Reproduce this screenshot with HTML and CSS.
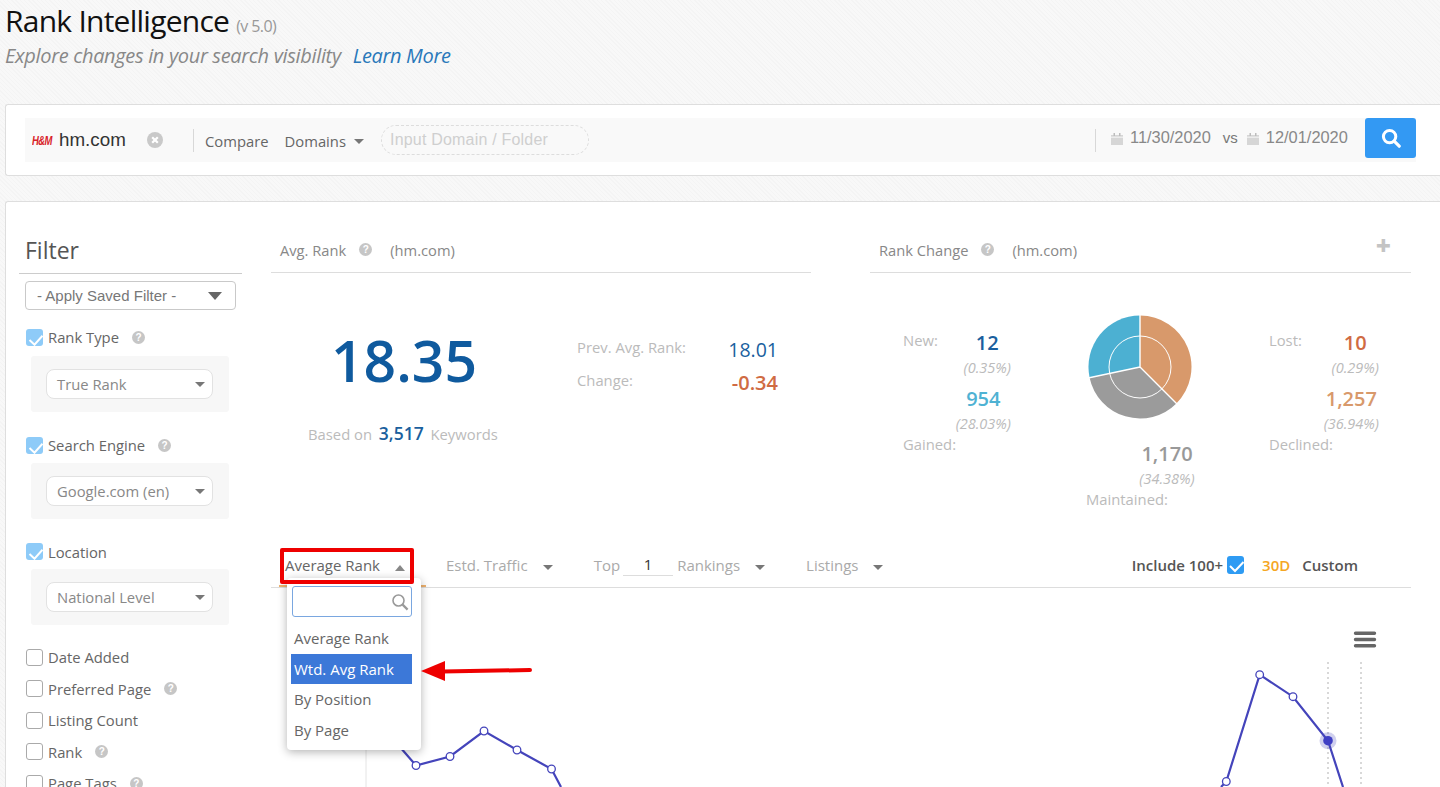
FILE: index.html
```html
<!DOCTYPE html>
<html lang="en">
<head>
<meta charset="utf-8">
<title>Rank Intelligence</title>
<link rel="stylesheet" href="styles.css">
</head>
<body>
<header class="page-head">
  <h1 class="title">Rank Intelligence <small class="version">(v 5.0)</small></h1>
  <p class="subtitle">Explore changes in your search visibility <a class="learn" href="#">Learn More</a></p>
</header>

<section class="search-card">
  <div class="search-bar">
    <span class="logo">H&amp;M</span>
    <span class="domain">hm.com</span>
    <svg class="clear" viewBox="0 0 16 16"><circle cx="8" cy="8" r="8" fill="#c9c9c9"/><path d="M5.2 5.2l5.6 5.6M10.8 5.2l-5.6 5.6" stroke="#fff" stroke-width="2.2"/></svg>
    <span class="divider"></span>
    <span class="bar-text compare">Compare</span>
    <span class="bar-text domains">Domains</span>
    <span class="caret small-caret"></span>
    <span class="pill">Input Domain / Folder</span>
    <span class="divider right"></span>
    <svg class="cal" viewBox="0 0 12 12"><path d="M0 2h12v10H0z" fill="#d6d6d6"/><path d="M2.5 0h1.5v3H2.5zM8 0h1.5v3H8z" fill="#bdbdbd"/><path d="M0 4.2h12" stroke="#fff" stroke-width=".8"/></svg>
    <span class="date">11/30/2020</span>
    <span class="vs">vs</span>
    <svg class="cal" viewBox="0 0 12 12"><path d="M0 2h12v10H0z" fill="#d6d6d6"/><path d="M2.5 0h1.5v3H2.5zM8 0h1.5v3H8z" fill="#bdbdbd"/><path d="M0 4.2h12" stroke="#fff" stroke-width=".8"/></svg>
    <span class="date">12/01/2020</span>
    <button class="go" type="button" aria-label="Search"><svg viewBox="0 0 20 20" width="20" height="20"><circle cx="8.6" cy="8.6" r="6.2" fill="none" stroke="#fff" stroke-width="3"/><path d="M13.2 13.2l5 5" stroke="#fff" stroke-width="3.2" stroke-linecap="round"/></svg></button>
  </div>
</section>

<main class="main-card">
  <aside class="filter">
    <h2 class="filter-title">Filter</h2>
    <div class="saved">- Apply Saved Filter -<span class="caret big-caret"></span></div>

    <div class="check-row first"><span class="box on"><svg viewBox="0 0 17 17"><path d="M3.5 11l5 4.7 8-9" fill="none" stroke="#fff" stroke-width="2"/></svg></span>Rank Type<span class="help">?</span></div>
    <div class="panel"><div class="select">True Rank<span class="caret"></span></div></div>

    <div class="check-row"><span class="box on"><svg viewBox="0 0 17 17"><path d="M3.5 11l5 4.7 8-9" fill="none" stroke="#fff" stroke-width="2"/></svg></span>Search Engine<span class="help">?</span></div>
    <div class="panel"><div class="select">Google.com (en)<span class="caret"></span></div></div>

    <div class="check-row last"><span class="box on"><svg viewBox="0 0 17 17"><path d="M3.5 11l5 4.7 8-9" fill="none" stroke="#fff" stroke-width="2"/></svg></span>Location</div>
    <div class="panel tight"><div class="select">National Level<span class="caret"></span></div></div>

    <div class="plain-list">
      <div class="check-row plain"><span class="box"></span>Date Added</div>
      <div class="check-row plain"><span class="box"></span>Preferred Page<span class="help">?</span></div>
      <div class="check-row plain"><span class="box"></span>Listing Count</div>
      <div class="check-row plain"><span class="box"></span>Rank<span class="help">?</span></div>
      <div class="check-row plain"><span class="box"></span>Page Tags<span class="help">?</span></div>
    </div>
  </aside>

  <div class="content">
    <div class="summary">
      <section class="widget">
        <div class="widget-head"><span>Avg. Rank</span><span class="help">?</span><span class="head-domain">(hm.com)</span></div>
        <div class="avg-body">
          <div class="avg-main">
            <div class="big-number">18.35</div>
            <div class="based">Based on <b class="kw">3,517</b> Keywords</div>
          </div>
          <dl class="avg-side">
            <dt>Prev. Avg. Rank:</dt><dd class="navy">18.01</dd>
            <dt>Change:</dt><dd class="rust">-0.34</dd>
          </dl>
        </div>
      </section>

      <section class="widget">
        <div class="widget-head change-head"><span>Rank Change</span><span class="help">?</span><span class="head-domain">(hm.com)</span><span class="plus">+</span></div>
        <div class="change-body">
          <div class="side">
            <div class="side-top"><span class="lbl">New:</span><div class="stat"><b class="navy">12</b><i>(0.35%)</i></div></div>
            <div class="stat end"><b class="sky">954</b><i>(28.03%)</i></div>
            <span class="lbl after">Gained:</span>
          </div>
          <div class="pie-col">
            <svg class="pie" viewBox="-52 -52 104 104">
              <path d="M0 0V-51.5A51.5 51.5 0 0 1 36.4 36.4Z" fill="#d8996b"/>
              <path d="M0 0L36.4 36.4A51.5 51.5 0 0 1 -50.4 10.7Z" fill="#9b9b9b"/>
              <path d="M0 0L-50.4 10.7A51.5 51.5 0 0 1 0 -51.5Z" fill="#4cb0d2"/>
              <path d="M0 -52V0L37 37M0 0L-52 11" fill="none" stroke="#fff" stroke-width="1.4"/>
              <circle r="31" fill="none" stroke="#fff" stroke-width="1"/>
            </svg>
            <div class="stat mid"><b class="grey">1,170</b><i>(34.38%)</i></div>
            <span class="lbl maintained">Maintained:</span>
          </div>
          <div class="side">
            <div class="side-top"><span class="lbl">Lost:</span><div class="stat"><b class="rust">10</b><i>(0.29%)</i></div></div>
            <div class="stat end"><b class="tan">1,257</b><i>(36.94%)</i></div>
            <span class="lbl after">Declined:</span>
          </div>
        </div>
      </section>
    </div>

    <div class="toolbar">
      <span class="tab active">Average Rank<span class="caret up"></span></span>
      <span class="tab traffic">Estd. Traffic<span class="caret"></span></span>
      <span class="tab top">Top<span class="top-input">1</span>Rankings<span class="caret"></span></span>
      <span class="tab listings">Listings<span class="caret"></span></span>
      <span class="tool-right">
        <span class="include">Include 100+</span>
        <span class="box solid"><svg viewBox="0 0 17 18"><path d="M3 10l5 5 8.5-9" fill="none" stroke="#fff" stroke-width="2"/></svg></span>
        <span class="range">30D</span>
        <span class="custom">Custom</span>
      </span>

      <span class="tab-line"></span>
      <span class="redbox"></span>

      <div class="dropdown">
        <div class="dd-search"><svg viewBox="0 0 18 18" width="18" height="18"><circle cx="7.5" cy="7.5" r="5.5" fill="none" stroke="#9a9a9a" stroke-width="1.6"/><path d="M11.6 11.6l5 5" stroke="#9a9a9a" stroke-width="2.2"/></svg></div>
        <div class="dd-item">Average Rank</div>
        <div class="dd-item selected">Wtd. Avg Rank</div>
        <div class="dd-item">By Position</div>
        <div class="dd-item">By Page</div>
      </div>

      <svg class="arrow" viewBox="0 0 112 22" width="112" height="22"><path d="M22 11.5L109 10" stroke="#ee0000" stroke-width="4" stroke-linecap="round"/><path d="M0 11L24 1V21Z" fill="#ee0000"/></svg>
    </div>

    <div class="chart">
      <svg class="plot" viewBox="271 588 1169 199" width="1169" height="199">
        <path d="M366 588V787" stroke="#e4e4e4"/>
        <path d="M1328 662V787M1361 662V787" stroke="#cfcfcf" stroke-width="1.6" stroke-dasharray="2 3"/>
        <path d="M400 747L416 765.5L450 756.5L484 731L517 750L551.5 769L561 787" fill="none" stroke="#4444bb" stroke-width="2.2"/>
        <path d="M1221 787L1226.3 781.5L1259.7 674.7L1293 696.7L1328 740.7L1343 787" fill="none" stroke="#4444bb" stroke-width="2.2"/>
        <g fill="#fff" stroke="#4444bb" stroke-width="1.3">
          <circle cx="416" cy="765.5" r="3.8"/><circle cx="450" cy="756.5" r="3.8"/><circle cx="484" cy="731" r="3.8"/><circle cx="517" cy="750" r="3.8"/><circle cx="551.5" cy="769" r="3.8"/>
          <circle cx="1226.3" cy="781.5" r="3.8"/><circle cx="1259.7" cy="674.7" r="3.8"/><circle cx="1293" cy="696.7" r="3.8"/>
        </g>
        <circle cx="1328" cy="740.7" r="8.5" fill="#4444bb" opacity=".25"/>
        <circle cx="1328" cy="740.7" r="4.8" fill="#3f3fc4"/>
        <path d="M1355.5 633.3H1374.5M1355.5 639.5H1374.5M1355.5 645.7H1374.5" stroke="#666" stroke-width="3.4" stroke-linecap="round"/>
      </svg>
    </div>
  </div>
</main>
</body>
</html>
```

FILE: styles.css
```css
* { box-sizing: border-box; }
html, body { height: 787px; overflow: hidden; }
body {
  margin: 0;
  font-family: "Open Sans", "Liberation Sans", sans-serif;
  font-size: 15px;
  color: #666;
  background-color: #f6f6f6;
  background-image: repeating-linear-gradient(45deg, #f4f4f4 0 1px, #f8f8f8 1px 3px);
}

/* page heading */
.page-head { height: 104px; padding: 0 0 0 5px; }
.title {
  margin: 0;
  font-size: 30px;
  line-height: 42px;
  font-weight: 400;
  letter-spacing: -.75px;
  color: #111;
}
.version { font-size: 16px; letter-spacing: -.6px; color: #999; }
.subtitle {
  margin: -5px 0 0;
  font-size: 20px;
  line-height: 28px;
  font-style: italic;
  letter-spacing: -.33px;
  color: #888;
}
.learn { margin-left: 7px; color: #2a78ba; text-decoration: none; }

/* search */
.search-card {
  height: 72px;
  margin-left: 5px;
  padding: 13px 0 0 19px;
  background: #fff;
  border: 1px solid #dedede;
  border-right: 0;
  border-radius: 3px 0 0 3px;
}
.search-bar {
  display: flex;
  align-items: center;
  width: 1391px;
  height: 44px;
  padding-left: 7px;
  background: #f9f9f9;
  position: relative;
}
.logo {
  flex: none;
  width: 27px;
  font: italic 700 9.5px "Liberation Sans", sans-serif;
  letter-spacing: -.6px;
  color: #d8232a;
  transform: scaleY(1.4);
  transform-origin: left center;
}
.domain { width: 88px; font: 18.8px "Liberation Sans", sans-serif; color: #333; }
.clear { width: 16px; height: 16px; }
.divider { width: 1px; height: 23px; margin-left: 30px; background: #d8d8d8; }
.divider.right { margin-left: 506px; }
.bar-text { margin-top: 2px; font-size: 14.8px; color: #666; }
.compare { margin-left: 11px; }
.domains { margin-left: 16px; }
.pill {
  width: 208px;
  height: 30px;
  margin-left: 17px;
  padding-left: 8px;
  border: 1px dashed #ddd;
  border-radius: 15px;
  font: 16px/27px "Liberation Sans", sans-serif;
  letter-spacing: .2px;
  color: #cfcfcf;
}
.cal { width: 12px; height: 12px; margin: -2px 7px 0 15px; }
.date { margin-bottom: 6px; font: 16.4px "Liberation Sans", sans-serif; color: #888; }
.vs { margin: 0 -6px 6px 12px; font: 15px "Liberation Sans", sans-serif; color: #777; }
.go {
  position: absolute;
  top: 0;
  right: 0;
  display: flex;
  align-items: center;
  justify-content: center;
  width: 51px;
  height: 40px;
  padding: 0;
  border: 0;
  border-radius: 3px;
  background: #3399f3;
}

/* carets */
.caret {
  display: inline-block;
  width: 0;
  height: 0;
  margin: 5px 0 0 15px;
  border-left: 5px solid transparent;
  border-right: 5px solid transparent;
  border-top: 5px solid #777;
  vertical-align: middle;
}
.caret.up { border-top: 0; border-bottom: 6px solid #888; }
.small-caret { margin: 3px 0 0 8px; }

/* main card */
.main-card {
  display: flex;
  height: 600px;
  margin: 25px 0 0 5px;
  background: #fff;
  border: 1px solid #dedede;
  border-right: 0;
  border-bottom: 0;
  border-radius: 3px 0 0 0;
  overflow: hidden;
}

/* filter column */
.filter { width: 265px; flex: none; padding: 0 0 0 13px; }
.filter-title {
  width: 223px;
  height: 72px;
  margin: 0;
  padding: 32px 0 0 6px;
  border-bottom: 1px solid #ccc;
  font-size: 23px;
  line-height: 33px;
  font-weight: 400;
  color: #555;
}
.saved {
  position: relative;
  width: 211px;
  height: 29px;
  margin: 7px 0 0 6px;
  padding-left: 11px;
  border: 1px solid #c9c9c9;
  border-radius: 4px;
  font: 15px/28px "Liberation Sans", sans-serif;
  color: #777;
}
.saved .caret { position: absolute; right: 13px; top: 10px; margin: 0; }
.big-caret { border-left-width: 7.5px; border-right-width: 7.5px; border-top-width: 8px; border-top-color: #666; }
.check-row {
  display: flex;
  align-items: center;
  height: 20px;
  margin: 23px 0 0 7px;
  font-size: 14.8px;
  color: #666;
}
.check-row.first { margin-top: 17px; }
.check-row.first + .panel { margin-top: 9px; }
.check-row.last { height: 19px; margin-top: 23px; }
.box {
  flex: none;
  width: 17px;
  height: 17px;
  margin-right: 5px;
  border: 1px solid #aaa;
  border-radius: 3px;
  background: #fff;
}
.box svg { display: block; width: 17px; height: 17px; }
.box.on { border: 0; background: #8ecbf8; }
.box.solid { height: 18px; margin: 0 18px 0 4px; border: 0; background: #2e9bf3; }
.box.solid svg { height: 18px; }
.help {
  display: inline-block;
  flex: none;
  width: 13px;
  height: 13px;
  margin-left: 13px;
  border-radius: 50%;
  background: #c6c6c6;
  font: 700 10px/13px "Liberation Sans", sans-serif;
  text-align: center;
  color: #fff;
}
.panel {
  width: 198px;
  height: 56px;
  margin: 8px 0 0 12px;
  padding: 13px 16px 0 15px;
  border-radius: 3px;
  background: #f7f7f7;
}
.panel.tight { margin-top: 8px; }
.select {
  position: relative;
  height: 30px;
  padding-left: 10px;
  border: 1px solid #e2e2e2;
  border-radius: 8px;
  background: #fff;
  font-size: 14.8px;
  line-height: 28px;
  color: #888;
}
.select .caret { position: absolute; right: 7px; top: 12px; margin: 0; }
.plain-list { margin-top: 22px; }
.check-row.plain { margin: 0 0 11.5px 7px; }

/* right column */
.content { width: 1140px; flex: none; display: flex; flex-direction: column; }
.summary { display: grid; grid-template-columns: 540px 541px; column-gap: 59px; height: 345px; }
.widget-head {
  display: flex;
  align-items: center;
  height: 71px;
  padding: 25px 0 0 9px;
  border-bottom: 1px solid #ddd;
  font-size: 14.7px;
  color: #888;
}
.head-domain { margin-left: 18px; }
.plus { margin: -9px 20px 0 auto; font-size: 26px; font-weight: 800; line-height: 24px; color: #c4c4c4; }

.avg-body { display: flex; }
.avg-main { width: 306px; padding: 49px 0 0 37px; }
.big-number { margin-left: 23px; font-size: 57px; font-weight: 600; line-height: 76px; color: #0f5a9e; }
.based { margin-top: 23px; font-size: 14.8px; color: #bbb; white-space: nowrap; }
.kw { margin: 0 3px; font-size: 17.5px; font-weight: 600; color: #1a5f9e; }
.avg-side {
  display: grid;
  grid-template-columns: 151px 50px;
  grid-auto-rows: 33px;
  margin: 60px 0 0 0;
  align-items: center;
}
.avg-side dt { font-size: 14.8px; margin-top: -6px; color: #bbb; white-space: nowrap; }
.avg-side dd { margin: 0; font-size: 19.5px; text-align: right; }
.navy { color: #1a5f9e; }
.rust { color: #d06b43; }
.sky { color: #4fb2d3; }
.tan { color: #d8996b; }
.grey { color: #999; }
.avg-side .rust { font-size: 20px; font-weight: 600; }

.change-body { display: grid; grid-template-columns: 108px 104px 110px; column-gap: 77px; padding: 42px 0 0 33px; }
.side { display: flex; flex-direction: column; }
.side-top { display: flex; justify-content: space-between; }
.lbl { font-size: 14.8px; color: #bbb; }
.side-top .lbl { margin-top: 15px; }
.stat { display: flex; flex-direction: column; align-items: center; }
.stat b { font-size: 20px; line-height: 25px; font-weight: 600; }
.stat i { font-size: 14.5px; line-height: 25px; color: #bbb; white-space: nowrap; }
.side-top .stat { margin-top: 15px; }
.stat.end { align-self: flex-end; margin-top: 6px; }
.after { margin-top: -2px; }
.pie { display: block; width: 104px; height: 104px; margin-top: -0.5px; }
.pie-col { display: flex; flex-direction: column; }
.stat.mid { width: 58px; margin: 22px 0 0 50px; }
.maintained { margin-top: -2px; margin-left: -2px; white-space: nowrap; }

/* toolbar */
.toolbar {
  position: relative;
  display: flex;
  align-items: center;
  width: 1140px;
  height: 41px;
  padding-bottom: 4px;
  padding-right: 53px;
  border-bottom: 1px solid #ddd;
  font-size: 15px;
  color: #aaa;
}
.tab { display: inline-flex; align-items: center; white-space: nowrap; }
.tab.active { margin-left: 14px; color: #666; }
.tab.traffic { margin-left: 41px; }
.tab.top { margin-left: 41px; }
.top-input { width: 50px; margin: 0 4px 0 3px; padding-bottom: 1px; border-bottom: 1px solid #ddd; text-align: center; color: #333; }
.tab.listings { margin-left: 41px; }
.tool-right { display: flex; align-items: center; margin-left: auto; font-weight: 600; color: #555; }
.range { color: #f5a623; margin-right: 12px; }
.tab-line {
  position: absolute;
  left: 8px;
  bottom: 0;
  width: 147px;
  height: 2px;
  background: #eeb26f;
}
.redbox {
  position: absolute;
  left: 9px;
  top: 1px;
  width: 134px;
  height: 36px;
  border: 4px solid #ee0000;
  border-radius: 2px;
  z-index: 3;
}
.dropdown {
  position: absolute;
  left: 16px;
  top: 31px;
  width: 134px;
  height: 172px;
  padding: 8px 9px 0 4px;
  border-radius: 4px;
  background: #fff;
  box-shadow: 0 2px 10px rgba(0,0,0,.3);
  color: #666;
  z-index: 2;
}
.dd-search {
  display: flex;
  justify-content: flex-end;
  align-items: center;
  width: 120px;
  height: 31px;
  margin: 0 0 6px 1px;
  padding-right: 2px;
  border: 1px solid #7aa7e0;
  border-radius: 3px;
}
.dd-item { height: 30.5px; padding-left: 3px; line-height: 30px; white-space: nowrap; }
.dd-item.selected { background: #3c78d8; color: #fff; }
.arrow { position: absolute; left: 150px; top: 113px; z-index: 3; }

/* chart */
.chart { flex: 1; overflow: hidden; }
.plot { display: block; }
```
